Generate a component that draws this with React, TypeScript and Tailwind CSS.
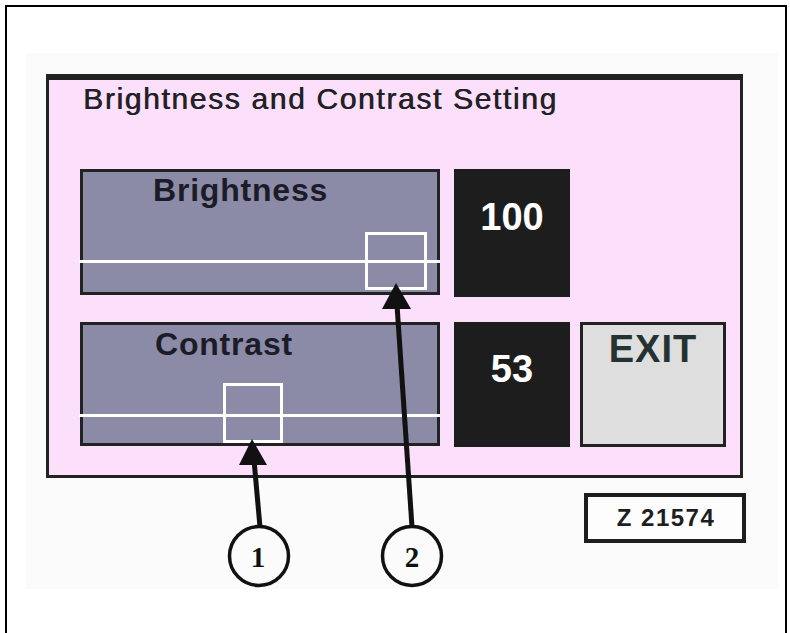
import React from "react";

const sans = { fontFamily: '"Liberation Sans", Arial, sans-serif' };

function Annotations() {
  return (
    <svg
      className="absolute left-0 top-0 pointer-events-none"
      width={790}
      height={633}
      viewBox="0 0 790 633"
    >
      {/* arrow 1 */}
      <line x1={254} y1={460} x2={260} y2={527} stroke="#111" strokeWidth={5} />
      <polygon points="252,439 239,465 267,465" fill="#111" />
      {/* arrow 2 */}
      <line x1={397} y1={305} x2={412} y2={527} stroke="#111" strokeWidth={5} />
      <polygon points="396,283 382,309 411,309" fill="#111" />
      {/* circles */}
      <circle cx={259} cy={556} r={29.5} fill="none" stroke="#111" strokeWidth={3.5} />
      <circle cx={412} cy={556} r={29.5} fill="none" stroke="#111" strokeWidth={3.5} />
      <text
        x={258}
        y={567}
        textAnchor="middle"
        fontFamily='"Liberation Serif", "Times New Roman", serif'
        fontWeight="bold"
        fontSize={29}
        fill="#111"
      >
        1
      </text>
      <text
        x={412}
        y={567}
        textAnchor="middle"
        fontFamily='"Liberation Serif", "Times New Roman", serif'
        fontWeight="bold"
        fontSize={29}
        fill="#111"
      >
        2
      </text>
    </svg>
  );
}

export default function App() {
  return (
    <div className="relative w-[790px] h-[633px] bg-white overflow-hidden" style={sans}>
      <div className="ml-[5px] mt-[5px] w-[782px] h-[628px] border-2 border-b-0 border-black">
        <div className="pl-[19px] pt-[46px]">
          <div className="w-[752px] h-[536px] bg-[#fbfbfb] flex flex-col">
            {/* pink panel */}
            <div className="ml-[20px] mt-[21px] w-[697px] h-[404px] bg-[#fcdffa] border-[#222] border-t-[6px] border-l-[3px] border-r-[3px] border-b-[3px] flex flex-col">
              <div className="mt-[4px] pl-[34px] text-[30px] leading-[30px] tracking-[1.65px] text-[#222226] [text-shadow:0.6px_0_0_#222226]">
                Brightness and Contrast Setting
              </div>

              {/* row 1 */}
              <div className="mt-[55px] pl-[31px] flex items-start">
                <div className="relative w-[360px] h-[126px] bg-[#8b8ba7] border-[3px] border-[#222]">
                  <div className="pl-[70px] pt-[2px] text-[32px] leading-[32px] font-bold tracking-[0.8px] text-[#1c1c28]">
                    Brightness
                  </div>
                  <div className="absolute left-[-4px] right-[-3px] top-[88px] h-[3px] bg-white" />
                  <div className="absolute left-[282px] top-[60px] w-[62px] h-[58px] border-[3px] border-white" />
                </div>
                <div className="ml-[14px] w-[116px] h-[128px] bg-[#1d1d1d] flex justify-center pt-[29px]">
                  <span className="text-[38px] leading-[38px] font-bold text-white">100</span>
                </div>
              </div>

              {/* row 2 */}
              <div className="mt-[25px] pl-[31px] flex items-start">
                <div className="relative w-[360px] h-[124px] bg-[#8b8ba7] border-[3px] border-[#222]">
                  <div className="pl-[72px] pt-[3px] text-[32px] leading-[32px] font-bold tracking-[0.8px] text-[#1c1c28]">
                    Contrast
                  </div>
                  <div className="absolute left-[-4px] right-[-3px] top-[89px] h-[3px] bg-white" />
                  <div className="absolute left-[140px] top-[58px] w-[60px] h-[60px] border-[3px] border-white" />
                </div>
                <div className="ml-[14px] w-[116px] h-[125px] bg-[#1d1d1d] flex justify-center pt-[28px]">
                  <span className="text-[38px] leading-[38px] font-bold text-white">53</span>
                </div>
                <div className="ml-[10px] w-[146px] h-[125px] bg-[#dedede] border-[3px] border-[#222] flex justify-center pt-[5px]">
                  <span className="text-[38px] leading-[38px] font-bold tracking-[1px] text-[#243232]">EXIT</span>
                </div>
              </div>
            </div>

            {/* figure number */}
            <div className="mt-[15px] pr-[32px] flex justify-end">
              <div className="w-[162px] h-[50px] border-4 border-[#1e1e1e] bg-[#fdfdfd] flex items-center justify-center">
                <span className="text-[24px] leading-[24px] font-bold tracking-[1.5px] text-[#1e1e1e] pl-[2px]">
                  Z 21574
                </span>
              </div>
            </div>
          </div>
        </div>
      </div>
      <Annotations />
    </div>
  );
}
